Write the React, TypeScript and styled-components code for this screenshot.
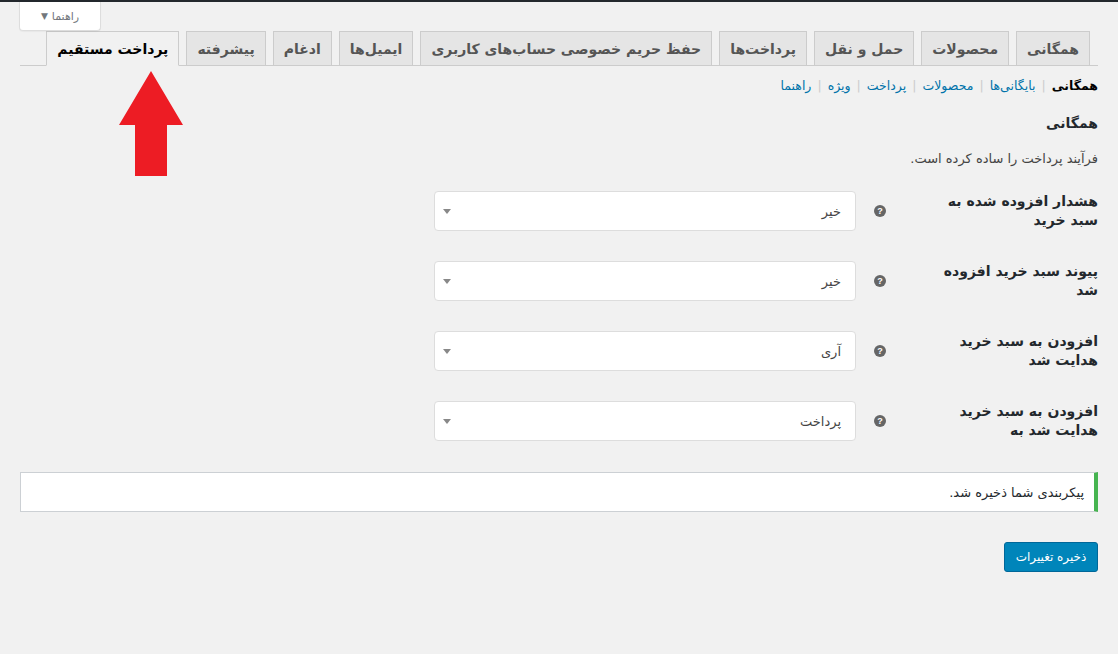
import React from 'react';
import styled, { createGlobalStyle } from 'styled-components';

const GlobalStyle = createGlobalStyle`
  body {
    margin: 0;
    background: #f1f1f1;
    font-family: "DejaVu Sans", "Liberation Sans", sans-serif;
    font-size: 13px;
    color: #444;
  }
`;

const Page = styled.div`
  direction: rtl;
  padding: 0 20px 0 20px;
  border-top: 2px solid #23282d;
  position: relative;
  min-height: 652px;
`;

const HelpButton = styled.div`
  position: absolute;
  left: 19px;
  top: 0;
  width: 80px;
  height: 28px;
  background: #fff;
  border: 1px solid #ddd;
  border-top: none;
  border-radius: 0 0 4px 4px;
  box-shadow: 0 1px 1px rgba(0, 0, 0, 0.04);
  display: flex;
  align-items: center;
  justify-content: center;
  gap: 4px;
  font-size: 11px;
  color: #72777c;
`;

const Tabs = styled.div`
  display: flex;
  align-items: flex-end;
  gap: 7px;
  padding: 27px 8px 0 0;
  border-bottom: 1px solid #ccc;
  height: 64px;
  box-sizing: border-box;
`;

const Tab = styled.div<{ $active?: boolean }>`
  height: ${(p) => (p.$active ? '35px' : '34px')};
  margin-bottom: ${(p) => (p.$active ? '-1px' : '0')};
  box-sizing: border-box;
  padding: 0 10px;
  display: flex;
  align-items: center;
  border: 1px solid #ccc;
  border-bottom: ${(p) => (p.$active ? '1px solid #f1f1f1' : 'none')};
  background: ${(p) => (p.$active ? '#f1f1f1' : '#e5e5e5')};
  color: ${(p) => (p.$active ? '#000' : '#555')};
  font-weight: bold;
  font-size: 14px;
  white-space: nowrap;
`;

const Arrow = styled.svg`
  position: absolute;
  left: 118px;
  top: 69px;
`;

const SubNav = styled.div`
  display: flex;
  gap: 6px;
  margin-top: 12px;
  font-size: 12.5px;
  color: #ccc;
`;

const SubLink = styled.span<{ $current?: boolean }>`
  color: ${(p) => (p.$current ? '#000' : '#0073aa')};
  font-weight: ${(p) => (p.$current ? 'bold' : 'normal')};
`;

const Heading = styled.h2`
  font-size: 14px;
  font-weight: bold;
  color: #23282d;
  margin: 22px 0 0 0;
`;

const Desc = styled.p`
  margin: 20px 0 10px 0;
  font-size: 13px;
  color: #444;
`;

const FormRow = styled.div`
  display: flex;
  align-items: center;
  padding: 12px 0;
  min-height: 46px;
`;

const Label = styled.div`
  width: 180px;
  font-weight: bold;
  font-size: 14px;
  color: #23282d;
  line-height: 19px;
`;

const Tip = styled.div`
  width: 12px;
  height: 12px;
  border-radius: 50%;
  background: #666;
  color: #fff;
  font-size: 9px;
  font-weight: bold;
  display: flex;
  align-items: center;
  justify-content: center;
  margin: 0 32px 0 18px;
  font-family: "Liberation Sans", sans-serif;
`;

const Select = styled.div`
  width: 398px;
  height: 38px;
  background: #fff;
  border: 1px solid #ddd;
  border-radius: 4px;
  display: flex;
  align-items: center;
  justify-content: space-between;
  padding: 0 14px 0 8px;
  font-size: 13px;
  color: #444;
`;

const Caret = styled.span`
  width: 0;
  height: 0;
  border-left: 4px solid transparent;
  border-right: 4px solid transparent;
  border-top: 5px solid #888;
`;

const Notice = styled.div`
  margin-top: 16px;
  background: #fff;
  border: 1px solid #ccd0d4;
  border-right: 4px solid #46b450;
  height: 38px;
  display: flex;
  align-items: center;
  padding: 0 10px;
  font-size: 13px;
  color: #23282d;
`;

const SaveButton = styled.div`
  margin-top: 30px;
  width: 94px;
  height: 30px;
  background: #0085ba;
  border: 1px solid #006799;
  border-radius: 3px;
  color: #fff;
  font-size: 12px;
  display: flex;
  align-items: center;
  justify-content: center;
  margin-right: 0;
  box-sizing: border-box;
`;

const tabs = ['همگانی', 'محصولات', 'حمل و نقل', 'پرداخت‌ها', 'حفظ حریم خصوصی حساب‌های کاربری', 'ایمیل‌ها', 'ادغام', 'پیشرفته'];
const sub = ['بایگانی‌ها', 'محصولات', 'پرداخت', 'ویژه', 'راهنما'];
const rows = [
  { label: 'هشدار افزوده شده به سبد خرید', value: 'خیر' },
  { label: 'پیوند سبد خرید افزوده شد', value: 'خیر' },
  { label: 'افزودن به سبد خرید هدایت شد', value: 'آری' },
  { label: 'افزودن به سبد خرید هدایت شد به', value: 'پرداخت' },
];

export default function App() {
  return (
    <>
      <GlobalStyle />
      <Page>
        <HelpButton>راهنما <span style={{ fontSize: 9 }}>▼</span></HelpButton>
        <Tabs>
          {tabs.map((t) => (
            <Tab key={t}>{t}</Tab>
          ))}
          <Tab $active>پرداخت مستقیم</Tab>
        </Tabs>
        <Arrow width="66" height="106" viewBox="0 0 66 106">
          <polygon points="33,0 65,54 49,54 49,105 17,105 17,54 1,54" fill="#ed1c24" />
        </Arrow>
        <SubNav>
          <SubLink $current>همگانی</SubLink>
          {sub.map((s) => (
            <React.Fragment key={s}>
              <span>|</span>
              <SubLink>{s}</SubLink>
            </React.Fragment>
          ))}
        </SubNav>
        <Heading>همگانی</Heading>
        <Desc>فرآیند پرداخت را ساده کرده است.</Desc>
        {rows.map((r) => (
          <FormRow key={r.label}>
            <Label>{r.label}</Label>
            <Tip>?</Tip>
            <Select>
              <span>{r.value}</span>
              <Caret />
            </Select>
          </FormRow>
        ))}
        <Notice>پیکربندی شما ذخیره شد.</Notice>
        <SaveButton>ذخیره تغییرات</SaveButton>
      </Page>
    </>
  );
}
